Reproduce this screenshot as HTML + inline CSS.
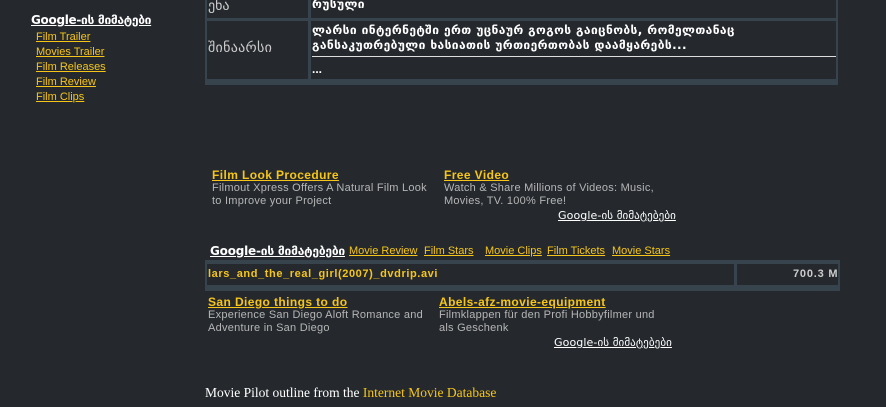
<!DOCTYPE html>
<html><head><meta charset="utf-8"><style>
body{margin:0;width:886px;height:407px;background:#25292e;position:relative;overflow:hidden;font-family:"Liberation Sans","DejaVu Sans",sans-serif}
.a{position:absolute;white-space:nowrap}
.y{color:#f5c518;text-decoration:underline}
.w{color:#fff;text-decoration:underline}
.g{color:#b5b5b5;font-size:11px;line-height:13px;letter-spacing:0.25px}
.t{font-weight:bold;font-size:12px;letter-spacing:0.4px}
</style></head><body>
<div class="a w" style="left:31px;top:13px;font-size:12px;font-weight:bold;font-family:'DejaVu Sans',sans-serif;letter-spacing:-0.3px">Google-ის მიმატები</div>
<div class="a y" style="left:36px;top:30px;font-size:11px;line-height:15px">Film Trailer<br>Movies Trailer<br>Film Releases<br>Film Review<br>Film Clips</div>

<div class="a" style="left:205px;top:-2px;width:633px;height:87px;background:#37444e"></div>
<div class="a" style="left:207px;top:0;width:101px;height:18px;background:#25292e"></div>
<div class="a" style="left:311px;top:0;width:525px;height:18px;background:#25292e"></div>
<div class="a" style="left:207px;top:21px;width:101px;height:58px;background:#25292e"></div>
<div class="a" style="left:311px;top:21px;width:525px;height:58px;background:#25292e"></div>
<div class="a" style="left:208px;top:-2px;color:#ccc;font-size:14px;font-family:'DejaVu Sans',sans-serif">ენა</div>
<div class="a" style="left:312px;top:-3px;color:#fff;font-size:12px;font-weight:bold;font-family:'DejaVu Sans',sans-serif;letter-spacing:0.4px">რუსული</div>
<div class="a" style="left:208px;top:40px;color:#ccc;font-size:14px;font-family:'DejaVu Sans',sans-serif;letter-spacing:0.3px">შინაარსი</div>
<div class="a" style="left:312px;top:23px;color:#fff;font-size:12px;font-weight:bold;line-height:15px;font-family:'DejaVu Sans',sans-serif;letter-spacing:0.4px">ლარსი ინტერნეტში ერთ უცნაურ გოგოს გაიცნობს, რომელთანაც<br>განსაკუთრებული ხასიათის ურთიერთობას დაამყარებს...</div>
<div class="a" style="left:312px;top:56px;width:524px;height:1px;background:#ddd"></div>
<div class="a" style="left:312px;top:62px;color:#fff;font-size:12px;font-weight:bold">...</div>

<div class="a y t" style="left:212px;top:168px">Film Look Procedure</div>
<div class="a g" style="left:212px;top:182px">Filmout Xpress Offers A Natural Film Look<br>to Improve your Project</div>
<div class="a y t" style="left:444px;top:168px">Free Video</div>
<div class="a g" style="left:444px;top:182px">Watch &amp; Share Millions of Videos: Music,<br>Movies, TV. 100% Free!</div>
<div class="a w" style="left:558px;top:209px;font-size:11px;font-family:'DejaVu Sans',sans-serif;letter-spacing:0.1px">Google-ის მიმატებები</div>

<div class="a w" style="left:210px;top:244px;font-size:12px;font-weight:bold;font-family:'DejaVu Sans',sans-serif;letter-spacing:-0.2px">Google-ის მიმატებები</div>
<div class="a y" style="left:349px;top:245px;font-size:11px">Movie Review</div>
<div class="a y" style="left:424px;top:245px;font-size:11px">Film Stars</div>
<div class="a y" style="left:485px;top:245px;font-size:11px">Movie Clips</div>
<div class="a y" style="left:547px;top:245px;font-size:11px">Film Tickets</div>
<div class="a y" style="left:612px;top:245px;font-size:11px">Movie Stars</div>

<div class="a" style="left:205px;top:260px;width:635px;height:31px;background:#37444e"></div>
<div class="a" style="left:207px;top:264px;width:527px;height:21px;background:#25292e"></div>
<div class="a" style="left:737px;top:264px;width:101px;height:21px;background:#25292e"></div>
<div class="a" style="left:208px;top:268px;color:#f5c518;font-size:11px;font-weight:bold;letter-spacing:0.6px">lars_and_the_real_girl(2007)_dvdrip.avi</div>
<div class="a" style="left:793px;top:268px;color:#ccc;font-size:11px;font-weight:bold;letter-spacing:0.8px">700.3 M</div>

<div class="a y t" style="left:208px;top:295px">San Diego things to do</div>
<div class="a g" style="left:208px;top:309px">Experience San Diego Aloft Romance and<br>Adventure in San Diego</div>
<div class="a y t" style="left:439px;top:295px">Abels-afz-movie-equipment</div>
<div class="a g" style="left:439px;top:309px">Filmklappen für den Profi Hobbyfilmer und<br>als Geschenk</div>
<div class="a w" style="left:554px;top:336px;font-size:11px;font-family:'DejaVu Sans',sans-serif;letter-spacing:0.1px">Google-ის მიმატებები</div>

<div class="a" style="left:205px;top:385px;color:#fff;font-size:13.5px;font-family:'Liberation Serif',serif">Movie Pilot outline from the <span style="color:#f5c518">Internet Movie Database</span></div>
</body></html>
